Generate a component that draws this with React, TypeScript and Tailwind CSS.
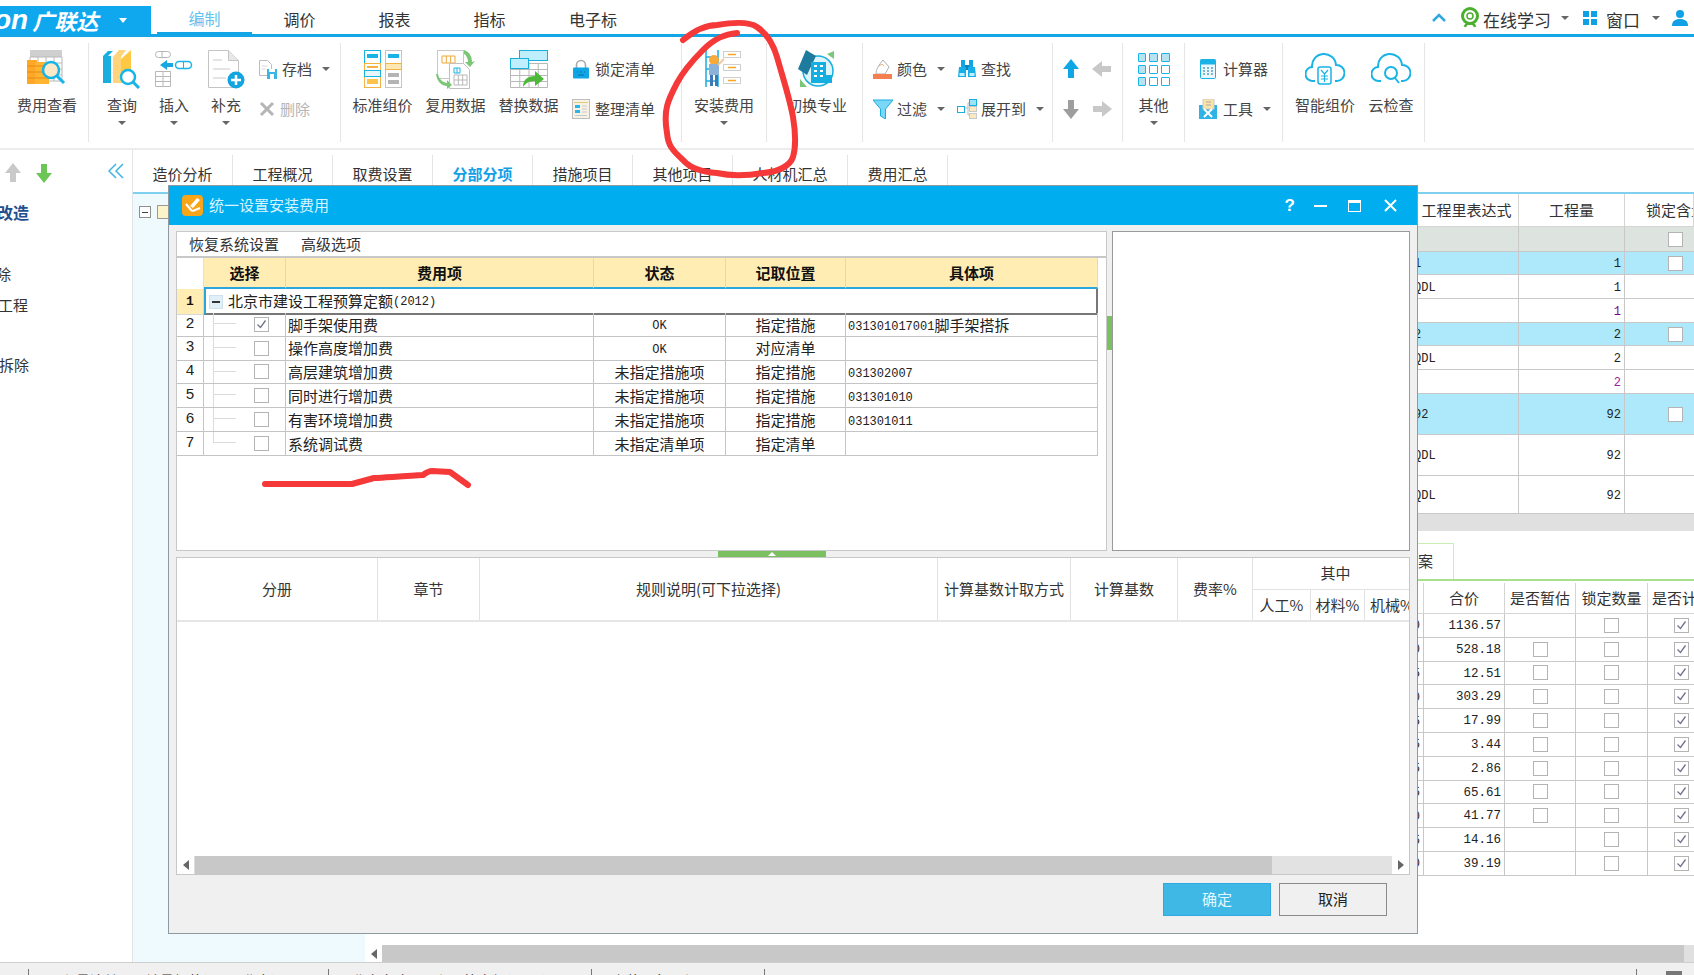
import React from "react";

const mono = "font-['Liberation_Mono',monospace]";

function Caret({ className = "" }: { className?: string }) {
  return <span className={"inline-block w-0 h-0 border-x-[4px] border-x-transparent border-t-[4px] border-t-[#666] " + className} />;
}

function GridLines({ x, y, w, h, cols, rows, stroke = "#b8b8b8" }: { x: number; y: number; w: number; h: number; cols: number; rows: number; stroke?: string }) {
  const out = [];
  for (let i = 0; i <= cols; i++) out.push(<line key={"c" + i} x1={x + (w * i) / cols} x2={x + (w * i) / cols} y1={y} y2={y + h} stroke={stroke} />);
  for (let i = 0; i <= rows; i++) out.push(<line key={"r" + i} y1={y + (h * i) / rows} y2={y + (h * i) / rows} x1={x} x2={x + w} stroke={stroke} />);
  return <g>{out}</g>;
}

function FeeIcon() {
  return (
    <svg width="40" height="40" viewBox="0 0 40 40">
      <rect x="3" y="1" width="32" height="7" fill="#cfcfcf" />
      <GridLines x={3} y={8} w={32} h={24} cols={4} rows={4} />
      <rect x="0" y="11" width="10" height="24" fill="#ffa726" />
      <rect x="8" y="13" width="14" height="22" fill="#ffb432" />
      <path d="M0 17h22M0 23h22M0 29h22" stroke="#e98a12" />
      <circle cx="24" cy="21" r="8" fill="#fde9c8" stroke="#16b5e8" strokeWidth="2.5" />
      <path d="M30 27l7 7" stroke="#16b5e8" strokeWidth="3" />
    </svg>
  );
}
function QueryIcon() {
  return (
    <svg width="40" height="40" viewBox="0 0 40 40">
      <path d="M1 7l5-5h5l-5 5v26l-5-2z" fill="#19aee0" />
      <rect x="1" y="7" width="8" height="27" fill="#19aee0" />
      <path d="M11 34V8l6-7 7 0-5 7v26z" fill="#ffd47a" />
      <path d="M19 34V10l10-9v23z" fill="#ffc843" />
      <circle cx="26" cy="28" r="7" fill="#fff" stroke="#16b5e8" strokeWidth="2.5" />
      <path d="M31 33l6 6" stroke="#16b5e8" strokeWidth="3" />
    </svg>
  );
}
function InsertIcon() {
  return (
    <svg width="40" height="40" viewBox="0 0 40 40">
      <rect x="1.5" y="2.5" width="15" height="6" rx="3" fill="none" stroke="#b5b5b5" />
      <path d="M8 2.5v6" stroke="#b5b5b5" />
      <path d="M6 16l7-5v3h6v4h-6v3z" fill="#18a8e0" />
      <rect x="21.5" y="12.5" width="16" height="7" rx="3.5" fill="none" stroke="#18b5e8" strokeWidth="1.5" />
      <path d="M29.5 12.5v7" stroke="#18b5e8" />
      <GridLines x={1.5} y={22.5} w={15} h={15} cols={2} rows={3} />
    </svg>
  );
}
function SupplementIcon() {
  return (
    <svg width="40" height="40" viewBox="0 0 40 40">
      <path d="M2.5 1.5h20l10 10v27h-30z" fill="#fff" stroke="#c4c4c4" />
      <path d="M22.5 1.5v10h10" fill="#e8e8e8" stroke="#c4c4c4" />
      <path d="M7 11h9M7 20h17M7 29h13" stroke="#dcdcdc" strokeWidth="1.5" />
      <circle cx="30" cy="31" r="8.5" fill="#12a5e0" />
      <path d="M30 26v10M25 31h10" stroke="#fff" strokeWidth="2.5" />
    </svg>
  );
}
function SaveIcon() {
  return (
    <svg width="20" height="20" viewBox="0 0 20 20">
      <path d="M1.5 1.5h8l4 4v11h-12z" fill="#fff" stroke="#bdbdbd" />
      <path d="M3.5 7h6M3.5 10h4" stroke="#d8d8d8" />
      <rect x="9" y="10" width="10" height="10" fill="#39b6e6" />
      <rect x="11" y="10" width="6" height="3" fill="#fff" />
      <rect x="12" y="15" width="4" height="5" fill="#fff" />
    </svg>
  );
}
function StdIcon() {
  return (
    <svg width="40" height="40" viewBox="0 0 40 40">
      <rect x="1.5" y="1.5" width="16" height="13" fill="#fff" stroke="#1ab3e6" />
      <rect x="4" y="5" width="11" height="4" fill="#1ab3e6" />
      <rect x="1.5" y="14.5" width="16" height="24" fill="#fff" stroke="#f6b345" />
      <rect x="4" y="17" width="11" height="2" fill="#f6b345" />
      <rect x="1.5" y="21.5" width="16" height="6" fill="#e6f6fc" stroke="#1ab3e6" />
      <rect x="4" y="30" width="11" height="5" fill="#fbc34c" />
      <rect x="22.5" y="1.5" width="16" height="37" fill="#fff" stroke="#c4c4c4" />
      <rect x="25" y="5" width="11" height="4" fill="#1ab3e6" />
      <rect x="22.5" y="14.5" width="16" height="6" fill="#fde7b3" stroke="#f6b345" />
      <rect x="25" y="24" width="11" height="4" fill="#b4b4b4" />
      <rect x="25" y="31" width="11" height="4" fill="#b4b4b4" />
    </svg>
  );
}
function ReuseIcon() {
  return (
    <svg width="40" height="40" viewBox="0 0 40 40">
      <rect x="1.5" y="1.5" width="26" height="28" fill="#fff" stroke="#c8c8c8" />
      <GridLines x={6} y={7} w={13} h={7} cols={3} rows={1} stroke="#f0a93b" />
      <path d="M13.5 14.5h14l6 6v19h-20z" fill="#fff" stroke="#c0c0c0" />
      <GridLines x={18} y={19} w={6} h={5} cols={2} rows={1} stroke="#1ab3e6" />
      <GridLines x={18} y={26} w={13} h={10} cols={3} rows={2} />
      <path d="M28 1c6 2 8 7 8 12l3-1-5 6-5-5 3 0c0-4-2-7-4-8z" fill="#7cc777" />
      <path d="M2 25c1 5 4 8 9 9v-3l5 5-5 4v-3c-5 0-10-4-11-12z" fill="#7cc777" />
    </svg>
  );
}
function ReplaceIcon() {
  return (
    <svg width="40" height="40" viewBox="0 0 40 40">
      <GridLines x={1.5} y={14.5} w={37} h={24} cols={4} rows={4} />
      <rect x="10.5" y="1.5" width="28" height="10" fill="#bfeefc" stroke="#18aede" />
      <rect x="1.5" y="9.5" width="18" height="10" fill="#bfeefc" stroke="#18aede" />
      <path d="M14 38c0-7 4-11 12-11v-5l9 8-9 7v-5c-6 0-9 2-12 6z" fill="#4eb83a" />
    </svg>
  );
}
function LockIcon() {
  return (
    <svg width="20" height="20" viewBox="0 0 20 20">
      <path d="M5.5 9V6a4.5 4.5 0 0 1 9 0v3" fill="none" stroke="#a9a9a9" strokeWidth="1.6" />
      <rect x="2" y="8.5" width="16" height="11" rx="1" fill="#0fa6e6" />
      <path d="M6 13h1M9 13h2M13 13h1M7 16h6" stroke="#0a6fa8" />
    </svg>
  );
}
function TidyIcon() {
  return (
    <svg width="20" height="20" viewBox="0 0 20 20">
      <rect x="1.5" y="0.5" width="17" height="19" fill="#f7f3e4" stroke="#bdbdbd" />
      <path d="M3 3.5h14" stroke="#e0c878" />
      <rect x="4" y="6" width="5" height="3" fill="#2fb2e6" />
      <rect x="4" y="11" width="5" height="3" fill="#2fb2e6" />
      <path d="M11 7h5M11 10h5M11 13h5M4 16.5h12" stroke="#c9c9c9" />
    </svg>
  );
}
function InstallIcon() {
  return (
    <svg width="40" height="40" viewBox="0 0 40 40">
      <path d="M2 1v37M14 1v37M2 8h12M2 20h12M2 32h12" stroke="#19aee0" strokeWidth="1.5" fill="none" />
      <circle cx="10" cy="11" r="5" fill="#f9a93a" />
      <rect x="5" y="15" width="10" height="11" fill="#8db2d8" />
      <path d="M6 26h3v11h-3zM11 26h3v11h-3z" fill="#3f79b5" />
      <path d="M14 16l6-6" stroke="#f3c7a0" strokeWidth="2" />
      <rect x="19.5" y="2.5" width="17" height="6" fill="#fff" stroke="#cfcfcf" />
      <path d="M24 5.5h8" stroke="#f6a623" strokeWidth="1.5" />
      <rect x="19.5" y="15.5" width="17" height="6" fill="#fff" stroke="#cfcfcf" />
      <path d="M24 18.5h8" stroke="#f6a623" strokeWidth="1.5" />
      <rect x="19.5" y="28.5" width="17" height="6" fill="#fff" stroke="#cfcfcf" />
      <path d="M24 31.5h8" stroke="#f6a623" strokeWidth="1.5" />
    </svg>
  );
}
function SwitchIcon() {
  return (
    <svg width="40" height="40" viewBox="0 0 40 40">
      <circle cx="21" cy="22" r="15" fill="#dff5fc" stroke="#18aede" strokeWidth="1.5" />
      <path d="M1 20L9 1l10 6-9 19z" fill="#1d7c9e" />
      <rect x="14" y="13" width="15" height="21" fill="#14aee0" />
      <path d="M17 17h3M23 17h3M17 22h3M23 22h3M17 27h3M23 27h3" stroke="#fff" strokeWidth="2" />
      <rect x="29" y="26" width="6" height="8" fill="#14aee0" />
      <path d="M30 5l7-3v8z" fill="#7cc777" />
      <path d="M3 30l7 8H3z" fill="#7cc777" />
    </svg>
  );
}
function ColorIcon() {
  return (
    <svg width="20" height="20" viewBox="0 0 20 20">
      <path d="M10 1l6 7-4 7H3c0-5 3-9 7-14z" fill="#fff" stroke="#b0b0b0" />
      <path d="M6 7c2-2 4-2 5 0" stroke="#e6a368" fill="none" />
      <rect x="0" y="15" width="19" height="5" fill="#f57f4f" />
    </svg>
  );
}
function FindIcon() {
  return (
    <svg width="20" height="20" viewBox="0 0 20 20">
      <rect x="4" y="1" width="4" height="7" fill="#0fa6e6" />
      <rect x="12" y="1" width="4" height="7" fill="#0fa6e6" />
      <rect x="8" y="6" width="4" height="5" fill="#0c7fb6" />
      <path d="M2 8h7v10H1zM11 8h7l1 10h-8z" fill="#14aee8" />
      <rect x="2.5" y="14" width="5" height="3" fill="#bfeefc" />
      <rect x="12.5" y="14" width="5" height="3" fill="#bfeefc" />
    </svg>
  );
}
function FilterIcon() {
  return (
    <svg width="20" height="20" viewBox="0 0 20 20">
      <path d="M0 1h20L12.5 10v10l-5-3v-7z" fill="#7ad7f7" stroke="#18aede" />
    </svg>
  );
}
function ExpandIcon() {
  return (
    <svg width="20" height="20" viewBox="0 0 20 20">
      <rect x="0.5" y="7.5" width="7" height="6" fill="#fff" stroke="#18aede" />
      <path d="M8 9h3v-5h1M11 9v7h1" stroke="#bbb" fill="none" />
      <rect x="12.5" y="0.5" width="7" height="6" fill="#9fe3f9" stroke="#18aede" />
      <rect x="12.5" y="7.5" width="7" height="5" fill="#fbe9c0" stroke="#c8c8c8" />
      <rect x="12.5" y="14.5" width="7" height="5" fill="#fbe9c0" stroke="#c8c8c8" />
    </svg>
  );
}
function Arrow({ dir, color }: { dir: "up" | "down" | "left" | "right"; color: string }) {
  const rot = { up: "rotate-0", down: "rotate-180", left: "-rotate-90", right: "rotate-90" }[dir];
  return (
    <svg width="20" height="20" viewBox="0 0 20 20" className={rot}>
      <path d="M10 0l8 10h-5v9H7v-9H2z" fill={color} />
    </svg>
  );
}
function OtherIcon() {
  const cells = [1, 1, 1, 1, 0, 0, 1, 0, 0];
  return (
    <div className="grid grid-cols-3 gap-[3px] w-[32px]">
      {cells.map((c, i) => (
        <span key={i} className={"h-[9px] rounded-[1px] border border-[#1ab3e6] " + (c ? "bg-[#b6e2f2]" : "bg-white")} />
      ))}
    </div>
  );
}
function CalcIcon() {
  return (
    <svg width="20" height="20" viewBox="0 0 20 20">
      <rect x="1.5" y="0.5" width="15" height="19" rx="1" fill="#eaf8fd" stroke="#1ab3e6" />
      <rect x="1.5" y="0.5" width="15" height="5" fill="#1ab3e6" />
      <path d="M4 9h2M8 9h2M12 9h2M4 12h2M8 12h2M12 12h2M4 15h2M8 15h2M12 15h2" stroke="#5a9fc0" strokeWidth="1.5" />
    </svg>
  );
}
function ToolIcon() {
  return (
    <svg width="20" height="20" viewBox="0 0 20 20">
      <rect x="0" y="6" width="18" height="14" fill="#2fb2e6" />
      <rect x="4" y="0" width="11" height="10" fill="#fbe3a5" stroke="#ccc" />
      <path d="M7 3h5M7 6h5" stroke="#aaa" />
      <path d="M5 10l8 8M13 10l-8 8" stroke="#fff" strokeWidth="2" />
    </svg>
  );
}
function CloudShape({ children }: { children: React.ReactNode }) {
  return (
    <svg width="40" height="40" viewBox="0 0 40 36" fill="none" stroke="#1ab3e6" strokeWidth="2">
      <path d="M10 30H8a7 7 0 0 1-1-14 12 12 0 0 1 24-2 8 8 0 0 1 1 16h-2" />
      {children}
    </svg>
  );
}
function TitleIcon() {
  return (
    <svg width="21" height="21" viewBox="0 0 21 21">
      <rect width="21" height="21" rx="4" fill="#f9a51a" />
      <path d="M4 9l5 6c1 1 3 1 4 0l5-2" fill="none" stroke="#fff" strokeWidth="2" />
      <path d="M8 11l7-8 3 2-7 8z" fill="#fff" />
    </svg>
  );
}

function BigButton({ width, label, icon, caret = false }: { width: string; label: string; icon: React.ReactNode; caret?: boolean }) {
  return (
    <div className={"flex flex-col items-center shrink-0 " + width}>
      <div className="h-[40px] flex items-center justify-center mt-[6px]">{icon}</div>
      <div className="mt-[6px] text-[15px] leading-[20px] text-[#444] whitespace-nowrap">{label}</div>
      {caret && <Caret className="mt-[6px]" />}
    </div>
  );
}

function SmallButton({ icon, label, caret = false, dim = false, gap = "gap-[4px]" }: { icon: React.ReactNode; label: string; caret?: boolean; dim?: boolean; gap?: string }) {
  return (
    <div className={"flex items-center h-[24px] " + gap}>
      {icon}
      <span className={"text-[15px] whitespace-nowrap " + (dim ? "text-[#b5b5b5]" : "text-[#444]")}>{label}</span>
      {caret && <Caret className="ml-[6px]" />}
    </div>
  );
}

function Group({ width, children, className = "" }: { width: string; children: React.ReactNode; className?: string }) {
  return <div className={"h-[99px] border-r border-[#e6e6e6] flex shrink-0 " + width + " " + className}>{children}</div>;
}

function TopBar() {
  const tabs = ["调价", "报表", "指标"];
  return (
    <div className="h-[37px] border-b-[3px] border-[#12a6e6] flex items-end shrink-0">
      <div className="w-[151px] h-[28px] bg-[#0fa8ee] flex items-center overflow-hidden text-white shrink-0">
        <span className="italic font-bold text-[28px] -ml-[6px] leading-[28px] font-['Liberation_Sans',sans-serif]">on</span>
        <span className="italic font-bold text-[22px] ml-[4px]">广联达</span>
        <span className="ml-[21px] w-0 h-0 border-x-[4px] border-x-transparent border-t-[5px] border-t-white" />
      </div>
      <div className="w-[95px] ml-[6px] h-[34px] border-b-[2px] border-[#12a6e6] text-center text-[16px] leading-[36px] text-[#5fc3ee]">编制</div>
      {tabs.map((t) => (
        <div key={t} className="w-[95px] h-[34px] text-center text-[16px] leading-[38px] text-[#333]">{t}</div>
      ))}
      <div className="w-[112px] h-[34px] text-center text-[16px] leading-[38px] text-[#333]">电子标</div>
      <div className="ml-auto h-[34px] flex items-center text-[17px] text-[#333] pt-[6px]">
        <svg width="14" height="10" viewBox="0 0 14 10" className="mr-[14px] -mt-[4px]"><path d="M1 8l6-6 6 6" fill="none" stroke="#2fa8e0" strokeWidth="2.5" /></svg>
        <svg width="20" height="22" viewBox="0 0 20 22" className="mr-[3px] -mt-[5px]">
          <circle cx="10" cy="9" r="7.5" fill="none" stroke="#4bb02f" strokeWidth="3" />
          <circle cx="10" cy="9" r="3" fill="none" stroke="#4bb02f" strokeWidth="1.5" />
          <path d="M5 20c1-5 9-5 10 0" fill="none" stroke="#4bb02f" strokeWidth="2.5" />
        </svg>
        <span>在线学习</span>
        <Caret className="ml-[10px] -mt-[4px]" />
        <div className="ml-[14px] -mt-[4px] grid grid-cols-2 gap-[2px] w-[14px]">
          <span className="h-[6px] bg-[#0fa0e6]" /><span className="h-[6px] bg-[#0fa0e6]" />
          <span className="h-[6px] bg-[#0fa0e6]" /><span className="h-[6px] bg-[#0fa0e6]" />
        </div>
        <span className="ml-[9px]">窗口</span>
        <Caret className="ml-[12px] -mt-[4px]" />
        <svg width="18" height="18" viewBox="0 0 18 18" className="ml-[11px] mr-[5px] -mt-[4px]">
          <circle cx="9" cy="5" r="4" fill="#0fa0e6" />
          <path d="M1 17c0-5 3-7 8-7s8 2 8 7z" fill="#0fa0e6" />
        </svg>
      </div>
    </div>
  );
}

function Ribbon() {
  return (
    <div className="h-[113px] border-b-[2px] border-[#ececec] flex pt-[6px] shrink-0 overflow-hidden">
      <Group width="w-[89px]">
        <BigButton width="w-[94px]" label="费用查看" icon={<FeeIcon />} />
      </Group>
      <Group width="w-[252px]" className="pl-[7px]">
        <BigButton width="w-[52px]" label="查询" icon={<QueryIcon />} caret />
        <BigButton width="w-[52px]" label="插入" icon={<InsertIcon />} caret />
        <BigButton width="w-[52px]" label="补充" icon={<SupplementIcon />} caret />
        <div className="pl-[6px] pt-[14px] flex flex-col gap-[16px]">
          <SmallButton icon={<SaveIcon />} label="存档" caret />
          <SmallButton icon={<svg width="18" height="18" viewBox="0 0 18 18"><path d="M3 3l12 12M15 3L3 15" stroke="#b5b5b5" strokeWidth="3" /></svg>} label="删除" dim />
        </div>
      </Group>
      <Group width="w-[341px]" className="pl-[5px]">
        <BigButton width="w-[73px]" label="标准组价" icon={<StdIcon />} />
        <BigButton width="w-[73px]" label="复用数据" icon={<ReuseIcon />} />
        <BigButton width="w-[73px]" label="替换数据" icon={<ReplaceIcon />} />
        <div className="pl-[6px] pt-[14px] flex flex-col gap-[16px]">
          <SmallButton icon={<LockIcon />} label="锁定清单" />
          <SmallButton icon={<TidyIcon />} label="整理清单" />
        </div>
      </Group>
      <Group width="w-[85px]">
        <BigButton width="w-full" label="安装费用" icon={<InstallIcon />} caret />
      </Group>
      <Group width="w-[96px]" className="pl-[5px]">
        <BigButton width="w-full" label="切换专业" icon={<SwitchIcon />} />
      </Group>
      <Group width="w-[190px]" className="pl-[10px] pt-[14px]">
        <div className="grid grid-cols-[84px_88px] gap-y-[16px] h-[64px]">
          <SmallButton icon={<ColorIcon />} label="颜色" caret />
          <SmallButton icon={<FindIcon />} label="查找" />
          <SmallButton icon={<FilterIcon />} label="过滤" caret />
          <SmallButton icon={<ExpandIcon />} label="展开到" caret />
        </div>
      </Group>
      <Group width="w-[70px]" className="h-[84px] pt-[16px] pl-[8px]">
        <div className="grid grid-cols-[31px_20px] gap-y-[20px] h-[60px]">
          <Arrow dir="up" color="#0fa6e6" />
          <Arrow dir="left" color="#c8c8c8" />
          <Arrow dir="down" color="#9e9e9e" />
          <Arrow dir="right" color="#c8c8c8" />
        </div>
      </Group>
      <Group width="w-[62px]">
        <BigButton width="w-full" label="其他" icon={<OtherIcon />} caret />
      </Group>
      <Group width="w-[98px]" className="pl-[14px] pt-[14px]">
        <div className="flex flex-col gap-[16px]">
          <SmallButton icon={<CalcIcon />} label="计算器" />
          <SmallButton icon={<ToolIcon />} label="工具" caret />
        </div>
      </Group>
      <Group width="w-[142px]" className="pl-[6px]">
        <BigButton
          width="w-[72px]"
          label="智能组价"
          icon={<CloudShape><rect x="13" y="16" width="13" height="17" rx="2" strokeWidth="1.5" /><path d="M16 19l3.5 4 3.5-4M19.5 23v8M16 25h7M16 28h7" strokeWidth="1.2" /></CloudShape>}
        />
        <BigButton
          width="w-[60px]"
          label="云检查"
          icon={<CloudShape><circle cx="20" cy="22" r="6" /><path d="M24 27l4 5" /></CloudShape>}
        />
      </Group>
    </div>
  );
}

function Sidebar() {
  return (
    <div className="w-[133px] border-r border-[#e4e4e4] bg-white shrink-0 overflow-hidden">
      <div className="h-[43px] flex items-center pl-[3px] pt-[2px]">
        <Arrow dir="up" color="#c9c9c9" />
        <span className="ml-[11px]"><Arrow dir="down" color="#6cc655" /></span>
        <svg width="18" height="16" viewBox="0 0 18 16" className="ml-[54px] -mt-[4px]">
          <path d="M8 1L1 8l7 7M15 1L8 8l7 7" fill="none" stroke="#3fb4e0" strokeWidth="1.5" />
        </svg>
      </div>
      <div className="text-[16px] font-bold text-[#234f8f] -ml-[3px] mt-[7px] leading-[24px] whitespace-nowrap">改造</div>
      <div className="text-[15px] text-[#333] -ml-[4px] mt-[39px] leading-[22px]">除</div>
      <div className="text-[15px] text-[#333] -ml-[2px] mt-[9px] leading-[22px]">工程</div>
      <div className="text-[15px] text-[#333] -ml-[1px] mt-[38px] leading-[22px]">拆除</div>
    </div>
  );
}

function Tabs() {
  const tabs: [string, string][] = [
    ["造价分析", "w-[100px]"],
    ["工程概况", "w-[100px]"],
    ["取费设置", "w-[100px]"],
    ["分部分项", "w-[100px]"],
    ["措施项目", "w-[100px]"],
    ["其他项目", "w-[100px]"],
    ["人材机汇总", "w-[115px]"],
    ["费用汇总", "w-[100px]"],
  ];
  return (
    <div className="h-[44px] flex pt-[5px] shrink-0 border-b-[2px] border-[#7fd0ee]">
      {tabs.map(([t, w]) => (
        <div key={t} className={"h-[37px] border-r border-[#e4e4e4] text-center text-[15px] leading-[38px] " + w + " " + (t === "分部分项" ? "text-[#12a0e6] font-bold" : "text-[#333]")}>{t}</div>
      ))}
    </div>
  );
}

function Check({ on = false, className = "" }: { on?: boolean; className?: string }) {
  return (
    <span className={"w-[15px] h-[15px] border border-[#b4b4b4] bg-white inline-flex items-center justify-center shrink-0 " + className}>
      {on && (
        <svg width="11" height="11" viewBox="0 0 11 11"><path d="M1.5 5.5l3 3 5-7" fill="none" stroke="#70738c" strokeWidth="1.3" /></svg>
      )}
    </span>
  );
}

const upperRows = [
  { name: "脚手架使用费", state: "OK", pos: "指定措施", item: "031301017001", tail: "脚手架搭拆", on: true },
  { name: "操作高度增加费", state: "OK", pos: "对应清单", item: "", tail: "", on: false },
  { name: "高层建筑增加费", state: "未指定措施项", pos: "指定措施", item: "031302007", tail: "", on: false },
  { name: "同时进行增加费", state: "未指定措施项", pos: "指定措施", item: "031301010", tail: "", on: false },
  { name: "有害环境增加费", state: "未指定措施项", pos: "指定措施", item: "031301011", tail: "", on: false },
  { name: "系统调试费", state: "未指定清单项", pos: "指定清单", item: "", tail: "", on: false },
];

const upperCols = "grid grid-cols-[27px_82px_308px_132px_120px_252px] w-[921px]";

function UpperGrid() {
  const head = "bg-[#ffedb4] border-r border-[#d8d8d8] border-b-[2px] border-b-[#2ba6dc] text-center font-bold text-[15px] leading-[29px] text-[#111]";
  const cell = "border-r border-b border-[#c4c4c4] h-[23.8px] flex items-center text-[15px] text-[#222] overflow-hidden";
  const text = cell + " pt-[1px]";
  return (
    <div className="flex flex-col">
      <div className={upperCols + " h-[31px]"}>
        <div className="border-r border-[#e0e0e0]" />
        {["选择", "费用项", "状态", "记取位置", "具体项"].map((h) => (
          <div key={h} className={head}>{h}</div>
        ))}
      </div>
      <div className={upperCols + " h-[24px]"}>
        <div className={"bg-[#ffedb4] border-r border-b border-[#d8d8d8] text-center text-[13px] leading-[25px] font-bold text-[#111] " + mono}>1</div>
        <div className="col-span-5 border-l-[2px] border-l-[#2ba6dc] border-r-[2px] border-r-[#777] border-b-[2px] border-b-[#777] flex items-center text-[15px] text-[#222] pl-[3px] pt-[1px]">
          <span className="w-[14px] h-[14px] bg-[#dff0f8] border border-[#cfe2ec] flex items-center justify-center mr-[5px]">
            <span className="w-[8px] h-[2px] bg-[#333]" />
          </span>
          北京市建设工程预算定额<span className={mono + " text-[12px]"}>(2012)</span>
        </div>
      </div>
      {upperRows.map((r, i) => {
        const last = i === upperRows.length - 1;
        return (
          <div key={r.name} className={upperCols}>
            <div className={text + " justify-center " + mono + " text-[13px]"}>{i + 2}</div>
            <div className={cell}>
              <div className={"self-stretch ml-[9px] w-[23px] " + (last ? "" : "border-l border-[#dcdcdc]")}>
                <div className={"h-[11px] border-b border-[#dcdcdc] " + (last ? "border-l" : "")} />
              </div>
              <Check on={r.on} className="ml-[18px]" />
            </div>
            <div className={text + " pl-[2px]"}>{r.name}</div>
            <div className={text + " justify-center"}>
              {r.state === "OK" ? <span className={mono + " text-[12px] translate-y-[1px]"}>OK</span> : r.state}
            </div>
            <div className={text + " justify-center"}>{r.pos}</div>
            <div className={text + " pl-[2px]"}>
              <span className={mono + " text-[12px] translate-y-[2px]"}>{r.item}</span>{r.tail}
            </div>
          </div>
        );
      })}
    </div>
  );
}

function LowerGrid() {
  const h = "border-r border-[#e2e2e2] flex items-center justify-center text-[15px] text-[#333]";
  return (
    <div className="h-[318px] border border-[#c8c8c8] bg-white flex flex-col overflow-hidden">
      <div className="grid grid-cols-[201px_102px_458px_133px_107px_75px_157px] h-[64px] border-b-[2px] border-[#e6e6e6] shrink-0">
        <div className={h}>分册</div>
        <div className={h}>章节</div>
        <div className={h + " text-[15.5px]"}>规则说明(可下拉选择)</div>
        <div className={h}>计算基数计取方式</div>
        <div className={h}>计算基数</div>
        <div className={h}>费率%</div>
        <div className="flex flex-col">
          <div className="h-[32px] border-b border-[#e2e2e2] flex items-center justify-center text-[15px] text-[#333] pl-[8px]">其中</div>
          <div className="flex-1 grid grid-cols-[58px_54px_45px]">
            <div className={h}>人工%</div>
            <div className={h}>材料%</div>
            <div className="flex items-center text-[15px] text-[#333] pl-[5px] whitespace-nowrap overflow-hidden">机械%</div>
          </div>
        </div>
      </div>
      <div className="flex-1" />
      <div className="h-[18px] flex bg-[#e2e2e2] shrink-0">
        <div className="w-[18px] bg-white flex items-center justify-center border-r border-[#ddd]">
          <span className="w-0 h-0 border-y-[5px] border-y-transparent border-r-[6px] border-r-[#666]" />
        </div>
        <div className="w-[1077px] bg-[#c8c8c8]" />
        <div className="flex-1" />
        <div className="w-[17px] bg-white flex items-center justify-center">
          <span className="w-0 h-0 border-y-[5px] border-y-transparent border-l-[6px] border-l-[#666]" />
        </div>
      </div>
    </div>
  );
}

function Dialog() {
  return (
    <div className="absolute left-[168px] top-[185px] w-[1250px] h-[749px] bg-[#f0f0f0] border border-[#8f9aa0] flex flex-col z-10">
      <div className="h-[39px] bg-[#00adef] flex items-center pl-[13px] text-white shrink-0">
        <TitleIcon />
        <span className="ml-[6px] text-[15px] text-[#d8f4ff]">统一设置安装费用</span>
        <div className="ml-auto flex items-center">
          <span className="text-[17px] font-bold font-['Liberation_Sans',sans-serif] mr-[19px]">?</span>
          <span className="w-[13px] h-[2px] bg-white mr-[21px]" />
          <span className="w-[13px] h-[12px] border border-white border-t-[3px] mr-[23px]" />
          <svg width="13" height="13" viewBox="0 0 13 13" className="mr-[20px]"><path d="M1 1l11 11M12 1L1 12" stroke="#fff" strokeWidth="2" /></svg>
        </div>
      </div>
      <div className="flex-1 flex flex-col px-[7px] pt-[6px]">
        <div className="flex h-[320px] shrink-0">
          <div className="w-[931px] bg-white border border-[#c8c8c8] flex flex-col">
            <div className="h-[26px] flex items-center text-[15px] text-[#333] pl-[12px] gap-[22px] border-b-[2px] border-[#c8c8c8] shrink-0">
              <span>恢复系统设置</span>
              <span>高级选项</span>
            </div>
            <UpperGrid />
          </div>
          <div className="w-[5px] flex items-start">
            <div className="w-full h-[34px] mt-[85px] bg-[#7dc061]" />
          </div>
          <div className="w-[298px] bg-white border border-[#9a9a9a]" />
        </div>
        <div className="h-[6px] flex justify-start items-stretch shrink-0">
          <div className="ml-[542px] w-[108px] bg-[#7dc061] flex items-center justify-center">
            <span className="w-0 h-0 border-x-[4px] border-x-transparent border-b-[4px] border-b-white" />
          </div>
        </div>
        <LowerGrid />
        <div className="flex justify-end gap-[8px] pr-[23px] pt-[8px]">
          <div className="w-[108px] h-[33px] bg-[#3fb8e6] border border-[#2fa9df] text-[#e6f8ff] text-[15px] flex items-center justify-center">确定</div>
          <div className="w-[108px] h-[33px] bg-[#f0f0f0] border border-[#8a8a8a] text-[#222] text-[15px] flex items-center justify-center">取消</div>
        </div>
      </div>
    </div>
  );
}

const upperRight = [
  { h: "h-[25px]", bg: "bg-[#dde3df]", expr: "", qty: "", check: true, color: "" },
  { h: "h-[23px]", bg: "bg-[#aee8fb]", expr: "1", qty: "1", check: true, color: "" },
  { h: "h-[24px]", bg: "bg-white", expr: "QDL", qty: "1", check: false, color: "" },
  { h: "h-[24px]", bg: "bg-white", expr: "", qty: "1", check: false, color: "text-[#800080]" },
  { h: "h-[23px]", bg: "bg-[#aee8fb]", expr: "2", qty: "2", check: true, color: "" },
  { h: "h-[24px]", bg: "bg-white", expr: "QDL", qty: "2", check: false, color: "" },
  { h: "h-[24px]", bg: "bg-white", expr: "", qty: "2", check: false, color: "text-[#a020a0]" },
  { h: "h-[41px]", bg: "bg-[#aee8fb]", expr: "92", qty: "92", check: true, color: "" },
  { h: "h-[41px]", bg: "bg-white", expr: "QDL", qty: "92", check: false, color: "" },
  { h: "h-[38px]", bg: "bg-white", expr: "QDL", qty: "92", check: false, color: "" },
];

const lowerRight = [
  ["0", "1136.57", false],
  ["0", "528.18", true],
  ["5", "12.51", true],
  ["0", "303.29", true],
  ["5", "17.99", true],
  ["5", "3.44", true],
  ["5", "2.86", true],
  ["5", "65.61", true],
  ["0", "41.77", true],
  ["5", "14.16", false],
  ["0", "39.19", false],
] as [string, string, boolean][];

function RightPanel() {
  const upper = "grid grid-cols-[109px_106px_69px]";
  const lower = "grid grid-cols-[14px_81px_71px_72px_66px]";
  const head = "border-r border-b border-[#d4d4d4] flex items-center justify-center text-[15px] text-[#333] overflow-hidden whitespace-nowrap";
  return (
    <div className="w-[284px] h-full flex flex-col overflow-hidden">
      <div className={upper + " h-[33px] shrink-0"}>
        <div className={head + " pl-[5px]"}>工程里表达式</div>
        <div className={head}>工程量</div>
        <div className={head + " justify-start pl-[21px]"}>锁定含量</div>
      </div>
      {upperRight.map((r, i) => (
        <div key={i} className={upper + " shrink-0 " + r.h + " " + r.bg}>
          <div className={"border-r border-b border-[#c8c8c8] flex items-center pl-[4px] pt-[2px] overflow-hidden " + mono + " text-[12px] text-[#222]"}>{r.expr}</div>
          <div className={"border-r border-b border-[#c8c8c8] flex items-center justify-end pr-[3px] pt-[2px] " + mono + " text-[12px] " + (r.color || "text-[#222]")}>{r.qty}</div>
          <div className="border-b border-[#c8c8c8] flex items-center pl-[43px]">
            {r.check && <Check />}
          </div>
        </div>
      ))}
      <div className="h-[17px] bg-[#e0e0e0] shrink-0" />
      <div className="h-[12px] shrink-0" />
      <div className="h-[38px] flex shrink-0 border-b-[2px] border-[#a9e08c]">
        <div className="w-[44px] border-t border-r border-[#c9efb4] flex items-center justify-end pr-[20px] text-[15px] text-[#333]">案</div>
      </div>
      <div className="h-[2px] shrink-0" />
      <div className={lower + " h-[31px] shrink-0"}>
        <div className="border-r border-b border-[#d4d4d4]" />
        <div className={head}>合价</div>
        <div className={head}>是否暂估</div>
        <div className={head}>锁定数量</div>
        <div className={head + " justify-start pl-[4px]"}>是否计</div>
      </div>
      {lowerRight.map(([d, v, est], i) => (
        <div key={i} className={lower + " h-[23.8px] shrink-0"}>
          <div className={"border-r border-b border-[#c8c8c8] flex items-center justify-end pr-[3px] pt-[2px] " + mono + " text-[12px] text-[#222]"}>{d}</div>
          <div className={"border-r border-b border-[#c8c8c8] flex items-center justify-end pr-[3px] pt-[2px] " + mono + " text-[12.5px] text-[#222]"}>{v}</div>
          <div className="border-r border-b border-[#c8c8c8] flex items-center justify-center">{est && <Check />}</div>
          <div className="border-r border-b border-[#c8c8c8] flex items-center justify-center"><Check /></div>
          <div className="border-b border-[#c8c8c8] flex items-center justify-center"><Check on /></div>
        </div>
      ))}
    </div>
  );
}

function Body() {
  return (
    <div className="flex-1 flex min-h-0">
      <Sidebar />
      <div className="flex-1 flex flex-col min-w-0">
        <Tabs />
        <div className="flex-1 flex min-h-0">
          <div className="w-[232px] bg-[#eefafd] shrink-0 pl-[6px] pt-[9px] flex items-start gap-[6px]">
            <span className="w-[12px] h-[12px] border border-[#8f8f8f] bg-white flex items-center justify-center mt-[3px]">
              <span className="w-[6px] h-px bg-[#444]" />
            </span>
            <span className="w-[14px] h-[14px] bg-[#fdf3c9] border border-[#999] mt-[2px]" />
          </div>
          <div className="flex-1 flex flex-col min-w-0">
            <div className="flex-1 flex justify-end min-h-0 bg-white">
              <RightPanel />
            </div>
            <div className="h-[17px] flex bg-[#c8c8c8] shrink-0">
              <div className="w-[17px] bg-white flex items-center justify-center">
                <span className="w-0 h-0 border-y-[5px] border-y-transparent border-r-[6px] border-r-[#666]" />
              </div>
              <div className="flex-1" />
              <div className="w-[10px] bg-[#e0e0e0]" />
            </div>
          </div>
        </div>
      </div>
    </div>
  );
}

function StatusBar() {
  const item = "h-full border-l border-[#777] mt-[6px] text-[14px] leading-[16px] text-[#333] whitespace-nowrap";
  return (
    <div className="h-[13px] bg-[#f0f0f0] border-t border-[#cfcfcf] flex overflow-hidden shrink-0 pl-[28px]">
      <div className={item + " w-[300px] pl-[19px] pt-[3px]"}>工程量清单项目计量规范(2013-北京)</div>
      <div className={item + " w-[263px] pl-[23px] pt-[3px]"}>北京市建设工程预算定额(2012)</div>
      <div className={item + " w-[173px] pl-[20px] pt-[3px]"}>安装设备工程</div>
      <div className={item + " w-[872px]"} />
      <div className={item + " w-[30px]"} />
      <div className="mt-[8px] w-[16px] h-[6px] bg-[#777]" />
    </div>
  );
}

function Annotation() {
  return (
    <svg width="1694" height="975" viewBox="0 0 1694 975" className="absolute left-0 top-0 pointer-events-none z-20">
      <path
        d="M683 40C695 30 705 25 717 25C735 22 750 22 757 27C770 36 775 50 777 57C785 85 790 100 793 117C796 135 795 150 793 157C790 166 778 172 763 173C745 176 730 176 717 173C700 172 690 168 683 160C672 150 668 145 667 133C663 110 668 100 677 83C685 68 695 58 703 50C715 38 725 34 737 33"
        fill="none"
        stroke="#f53838"
        strokeWidth="6"
        strokeLinecap="round"
      />
      <path
        d="M265 484L352 484L374 478C390 477 410 476 423 475C427 472 430 471 432 471L450 472L468 485"
        fill="none"
        stroke="#f53838"
        strokeWidth="6"
        strokeLinecap="round"
        strokeLinejoin="round"
      />
    </svg>
  );
}

export default function App() {
  return (
    <div className="relative w-[1694px] h-[975px] overflow-hidden bg-white flex flex-col font-['Noto_Sans_CJK_SC','Noto_Sans',sans-serif]">
      <TopBar />
      <Ribbon />
      <Body />
      <StatusBar />
      <Dialog />
      <Annotation />
    </div>
  );
}
